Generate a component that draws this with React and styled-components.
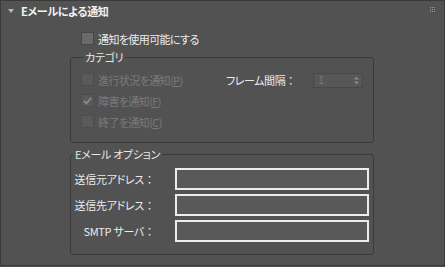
import React from "react";
import styled, { createGlobalStyle } from "styled-components";

const GlobalStyle = createGlobalStyle`
  html, body { margin: 0; padding: 0; background: #525252; }
  body {
    font-family: "Noto Sans CJK JP", "Noto Sans", sans-serif;
    -webkit-font-smoothing: none;
  }
`;

const Panel = styled.div`
  width: 445px;
  height: 266px;
  box-sizing: border-box;
  border: 1px solid #3a3a3a;
  background: #525252;
  display: flex;
  flex-direction: column;
`;

const Header = styled.div`
  height: 20px;
  display: flex;
  align-items: center;
  padding: 0 8px 0 7px;
`;

const Title = styled.span`
  margin-left: 7px;
  font-size: 11px;
  font-weight: 700;
  color: #f2f2f2;
  font-feature-settings: "palt";
  letter-spacing: -0.3px;
  line-height: 12px;
`;

const Grip = styled.svg`
  margin-left: auto;
  align-self: flex-start;
  margin-top: 6px;
`;

const Body = styled.div`
  padding: 0 70px 0 69px;
  display: flex;
  flex-direction: column;
`;

const CheckRow = styled.label`
  display: flex;
  align-items: center;
  gap: 4px;
  height: 13px;
  font-size: 11px;
  line-height: 12px;
  font-feature-settings: "palt";
  letter-spacing: -0.6px;
  color: ${(p) => (p.$disabled ? "#7a7a7a" : "#ececec")};
`;

const EnableRow = styled(CheckRow)`
  margin-top: 11px;
  padding-left: 11px;
`;

const Box = styled.span`
  width: 13px;
  height: 13px;
  box-sizing: border-box;
  flex: none;
  display: flex;
  align-items: center;
  justify-content: center;
  border: 1px solid ${(p) => (p.$disabled ? "#4d4d4d" : "#474747")};
  background: ${(p) => (p.$disabled ? "#5a5a5a" : "#6a6a6a")};
`;

const Group = styled.fieldset`
  margin: ${(p) => p.$top}px 0 0 0;
  min-inline-size: 0;
  border: 1px solid #3b3b3b;
  border-radius: 3px;
  padding: ${(p) => p.$pad};
`;

const Legend = styled.legend`
  font-size: 11px;
  line-height: 12px;
  padding: 0 2px;
  margin-left: 2px;
  color: #e8e8e8;
  font-feature-settings: "palt";
  letter-spacing: -0.3px;
`;

const CatInner = styled.div`
  display: flex;
  align-items: flex-start;
`;

const LeftCol = styled.div`
  width: 145px;
  display: flex;
  flex-direction: column;
  gap: 8px;
`;

const FrameRow = styled.div`
  display: flex;
  align-items: center;
  height: 13px;
`;

const FrameLabel = styled.span`
  width: 87px;
  font-size: 11px;
  line-height: 12px;
  color: #ececec;
  font-feature-settings: "palt";
  letter-spacing: -0.4px;
`;

const Colon = styled.span`
  font-feature-settings: normal;
  letter-spacing: 0;
`;

const Spinner = styled.div`
  width: 50px;
  height: 15px;
  box-sizing: border-box;
  margin-top: 1px;
  border: 1px solid #484848;
  background: #575757;
  display: flex;
  align-items: center;
  justify-content: space-between;
  padding: 0 3px 0 4px;
  font-family: "DejaVu Sans", sans-serif;
  font-size: 10px;
  color: #787878;
`;

const Mnemonic = styled.u`
  text-underline-offset: 1px;
`;

const EmailGrid = styled.div`
  display: grid;
  grid-template-columns: 1fr 194px;
  row-gap: 4px;
  align-items: center;
`;

const FieldLabel = styled.span`
  justify-self: end;
  padding-right: 20px;
  font-size: 11px;
  line-height: 12px;
  color: #ececec;
  font-feature-settings: "palt";
  letter-spacing: -0.3px;
`;

const TextBox = styled.input`
  height: 22px;
  width: 194px;
  box-sizing: border-box;
  border: 2px solid #ececec;
  background: #595959;
  margin: 0;
  padding: 0 3px;
  color: #eee;
  outline: none;
  font-size: 11px;
`;

const Check = () => (
  <svg width="9" height="8" viewBox="0 0 9 8">
    <path d="M1 4 L3.5 6.5 L8 1" stroke="#8a8a8a" strokeWidth="1.8" fill="none" />
  </svg>
);

function CheckItem({ label, mnemonic, checked, disabled }) {
  return (
    <CheckRow $disabled={disabled}>
      <Box $disabled={disabled}>{checked && <Check />}</Box>
      <span>
        {label}(<Mnemonic>{mnemonic}</Mnemonic>)
      </span>
    </CheckRow>
  );
}

export default function App() {
  return (
    <>
      <GlobalStyle />
      <Panel>
        <Header>
          <svg width="6" height="4" viewBox="0 0 6 4">
            <path d="M0 0 H6 L3 4 Z" fill="#b8b8b8" />
          </svg>
          <Title>Eメールによる通知</Title>
          <Grip width="6" height="6" viewBox="0 0 6 6">
            {[0, 2, 4].map((x) =>
              [0, 2, 4].map((y) => (
                <rect key={`${x}-${y}`} x={x} y={y} width="1" height="1" fill="#9a9a9a" />
              ))
            )}
          </Grip>
        </Header>
        <Body>
          <EnableRow>
            <Box />
            <span>通知を使用可能にする</span>
          </EnableRow>

          <Group $top={6} $pad="10px 0 14px 10px">
            <Legend>カテゴリ</Legend>
            <CatInner>
              <LeftCol>
                <CheckItem label="進行状況を通知" mnemonic="P" disabled />
                <CheckItem label="障害を通知" mnemonic="F" disabled checked />
                <CheckItem label="終了を通知" mnemonic="C" disabled />
              </LeftCol>
              <FrameRow>
                <FrameLabel>
                  フレーム間隔<Colon>：</Colon>
                </FrameLabel>
                <Spinner>
                  <span>1</span>
                  <svg width="5" height="9" viewBox="0 0 5 9">
                    <path d="M0 3.5 L2.5 0.5 L5 3.5 Z M0 5.5 L2.5 8.5 L5 5.5 Z" fill="#8a8a8a" />
                  </svg>
                </Spinner>
              </FrameRow>
            </CatInner>
          </Group>

          <Group $top={5} $pad="8px 4px 12px 0">
            <Legend>Eメール オプション</Legend>
            <EmailGrid>
              <FieldLabel>
                送信元アドレス<Colon>：</Colon>
              </FieldLabel>
              <TextBox type="text" defaultValue="" />
              <FieldLabel>
                送信先アドレス<Colon>：</Colon>
              </FieldLabel>
              <TextBox type="text" defaultValue="" />
              <FieldLabel>
                SMTP サーバ<Colon>：</Colon>
              </FieldLabel>
              <TextBox type="text" defaultValue="" />
            </EmailGrid>
          </Group>
        </Body>
      </Panel>
    </>
  );
}
